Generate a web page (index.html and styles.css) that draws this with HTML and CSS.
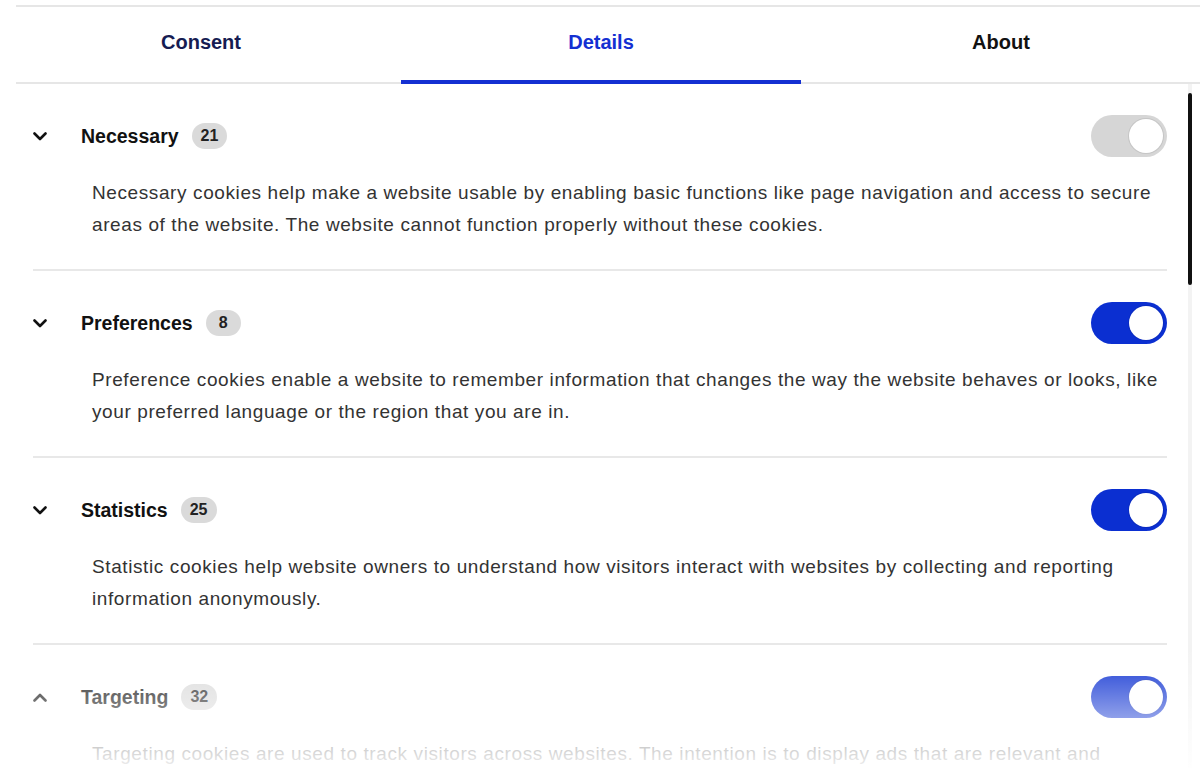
FILE: index.html
```html
<!DOCTYPE html>
<html lang="en">
<head>
    <meta charset="UTF-8">
    <title>Cookie settings - Details</title>
    <link rel="stylesheet" href="styles.css">
</head>
<body>
    <div class="dialog">
        <div class="tabbar">
            <nav class="tabs">
                <a class="tab tab-consent">Consent</a>
                <a class="tab active">Details</a>
                <a class="tab">About</a>
            </nav>
        </div>

        <div class="panel">
            <div class="list">
                <section class="category">
                    <div class="category-head">
                        <span class="chevron">
                            <svg width="14" height="9" viewBox="0 0 14 9"><path d="M1.5 1.5 L7 7 L12.5 1.5" fill="none" stroke="#111" stroke-width="2.6" stroke-linecap="round" stroke-linejoin="round"/></svg>
                        </span>
                        <h3>Necessary</h3>
                        <span class="badge">21</span>
                        <span class="toggle disabled"><span class="knob"></span></span>
                    </div>
                    <p class="desc">Necessary cookies help make a website usable by enabling basic functions like page navigation and access to secure areas of the website. The website cannot function properly without these cookies.</p>
                </section>

                <section class="category">
                    <div class="category-head">
                        <span class="chevron">
                            <svg width="14" height="9" viewBox="0 0 14 9"><path d="M1.5 1.5 L7 7 L12.5 1.5" fill="none" stroke="#111" stroke-width="2.6" stroke-linecap="round" stroke-linejoin="round"/></svg>
                        </span>
                        <h3>Preferences</h3>
                        <span class="badge">8</span>
                        <span class="toggle"><span class="knob"></span></span>
                    </div>
                    <p class="desc">Preference cookies enable a website to remember information that changes the way the website behaves or looks, like your preferred language or the region that you are in.</p>
                </section>

                <section class="category">
                    <div class="category-head">
                        <span class="chevron">
                            <svg width="14" height="9" viewBox="0 0 14 9"><path d="M1.5 1.5 L7 7 L12.5 1.5" fill="none" stroke="#111" stroke-width="2.6" stroke-linecap="round" stroke-linejoin="round"/></svg>
                        </span>
                        <h3>Statistics</h3>
                        <span class="badge">25</span>
                        <span class="toggle"><span class="knob"></span></span>
                    </div>
                    <p class="desc">Statistic cookies help website owners to understand how visitors interact with websites by collecting and reporting information anonymously.</p>
                </section>

                <section class="category">
                    <div class="category-head">
                        <span class="chevron">
                            <svg width="14" height="9" viewBox="0 0 14 9"><path d="M1.5 7.5 L7 2 L12.5 7.5" fill="none" stroke="#111" stroke-width="2.6" stroke-linecap="round" stroke-linejoin="round"/></svg>
                        </span>
                        <h3>Targeting</h3>
                        <span class="badge">32</span>
                        <span class="toggle"><span class="knob"></span></span>
                    </div>
                    <p class="desc">Targeting cookies are used to track visitors across websites. The intention is to display ads that are relevant and engaging for the individual user and thereby more valuable for publishers and third party advertisers.</p>
                </section>
            </div>

            <div class="scroll-track">
                <div class="scroll-thumb"></div>
            </div>
        </div>
    </div>
</body>
</html>
```

FILE: styles.css
```css
body {
    margin: 0;
    background-color: #fff;
    font-family: "Liberation Sans", Arial, sans-serif;
    color: #111;
    overflow: hidden;
}

.dialog {
    padding-top: 5px;
}

/* Tabs */
.tabbar {
    margin-left: 16px;
    border-top: 2px solid #e6e6e6;
    border-bottom: 2px solid #e6e6e6;
}

.tabs {
    display: grid;
    grid-template-columns: repeat(3, 400px);
    margin-left: -15px;
}

.tab {
    display: flex;
    align-items: center;
    justify-content: center;
    height: 70px;
    padding-bottom: 3px;
    border-bottom: 4px solid transparent;
    margin-bottom: -2px;
    font-size: 20px;
    font-weight: bold;
    color: #111;
}

.tab-consent {
    color: #161c52;
}

.tab.active {
    color: #1430d2;
    border-bottom-color: #1430d2;
}

/* Panel */
.panel {
    position: relative;
    display: flex;
    height: 684px;
}

.panel::after {
    content: "";
    position: absolute;
    left: 0;
    right: 0;
    bottom: 0;
    height: 122px;
    background: linear-gradient(to bottom, rgba(255, 255, 255, 0), rgba(255, 255, 255, 0.92));
}

.list {
    margin-left: 33px;
    width: 1134px;
}

.category {
    padding: 31px 0 28px;
    border-bottom: 2px solid #e8e8e8;
}

.category-head {
    display: flex;
    align-items: center;
    height: 42px;
}

.chevron {
    width: 48px;
    display: flex;
    align-items: center;
}

.category h3 {
    margin: 0;
    font-size: 19.5px;
    font-weight: bold;
    color: #111;
}

.badge {
    margin-left: 13px;
    height: 26px;
    min-width: 17px;
    padding: 0 9px;
    border-radius: 13px;
    background-color: #dadada;
    color: #222;
    font-size: 16px;
    font-weight: bold;
    line-height: 26px;
    text-align: center;
}

.toggle {
    margin-left: auto;
    width: 76px;
    height: 42px;
    border-radius: 21px;
    background-color: #0b2fd1;
    display: flex;
    align-items: center;
    justify-content: flex-end;
    padding-right: 4px;
    box-sizing: border-box;
}

.toggle.disabled {
    background-color: #d6d6d6;
}

.knob {
    width: 34px;
    height: 34px;
    border-radius: 50%;
    background-color: #fff;
    box-shadow: 0 0 0 1px rgba(0, 0, 0, 0.08);
}

.desc {
    margin: 20px 0 0 59px;
    font-size: 19px;
    letter-spacing: 0.6px;
    line-height: 32px;
    color: #333;
}

/* Scrollbar */
.scroll-track {
    margin-left: 21px;
    width: 4px;
    background-color: #f3f3f3;
}

.scroll-thumb {
    margin-top: 9px;
    height: 192px;
    border-radius: 2px;
    background-color: #111;
}
```
